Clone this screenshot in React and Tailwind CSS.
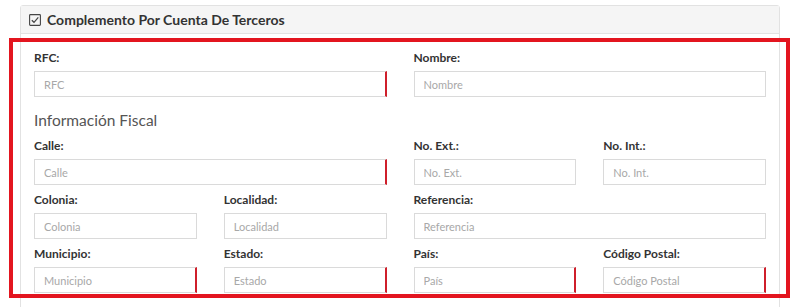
import React from "react";

const fields = [
  { label: "RFC:", placeholder: "RFC", span: "col-span-2", required: true },
  { label: "Nombre:", placeholder: "Nombre", span: "col-span-2" },
  { heading: "Información Fiscal" },
  { label: "Calle:", placeholder: "Calle", span: "col-span-2", required: true },
  { label: "No. Ext.:", placeholder: "No. Ext.", span: "col-span-1" },
  { label: "No. Int.:", placeholder: "No. Int.", span: "col-span-1" },
  { label: "Colonia:", placeholder: "Colonia", span: "col-span-1" },
  { label: "Localidad:", placeholder: "Localidad", span: "col-span-1" },
  { label: "Referencia:", placeholder: "Referencia", span: "col-span-2" },
  { label: "Municipio:", placeholder: "Municipio", span: "col-span-1", required: true },
  { label: "Estado:", placeholder: "Estado", span: "col-span-1", required: true },
  { label: "País:", placeholder: "País", span: "col-span-1", required: true },
  { label: "Código Postal:", placeholder: "Código Postal", span: "col-span-1", required: true },
];

function Field({ label, placeholder, span, required }) {
  return (
    <div className={`${span} mb-[6px]`}>
      <label className="block text-[12px] font-bold leading-[18px] mb-[4px] text-[#333]">
        {label}
      </label>
      <input
        type="text"
        placeholder={placeholder}
        className={`block w-full h-[26px] bg-white border border-[#dadada] px-[9px] text-[11px] text-[#555] placeholder:text-[#a8a8a8] outline-none ${
          required ? "border-r-2 border-r-[#cf1f2b]" : ""
        }`}
      />
    </div>
  );
}

function CheckIcon() {
  return (
    <svg width="12" height="12" viewBox="0 0 12 12" fill="none" className="shrink-0">
      <rect x="0.6" y="0.6" width="10.8" height="10.8" rx="0.8" stroke="#444" strokeWidth="1.1" />
      <path d="M2.8 6.2 L5 8.3 L9.3 3.4" stroke="#444" strokeWidth="1.2" fill="none" />
    </svg>
  );
}

export default function App() {
  return (
    <div
      className="relative h-[307px] w-[800px] overflow-hidden bg-white"
      style={{ fontFamily: "Lato, 'Open Sans', sans-serif" }}
    >
      <div className="mx-[20px] mt-[5px] border border-[#e2e2e2] rounded-t-[3px]">
        <div className="flex items-center gap-[6px] h-[28px] pl-[8px] bg-[#f5f5f5] border-b border-[#e2e2e2]">
          <CheckIcon />
          <span className="text-[14px] font-bold text-[#333]">
            Complemento Por Cuenta De Terceros
          </span>
        </div>
        <div className="grid grid-cols-4 gap-x-[27px] px-[13px] pt-[15px] pb-[20px]">
          {fields.map((f, i) =>
            f.heading ? (
              <div
                key={i}
                className="col-span-4 h-[34px] leading-[34px] text-[15.5px] text-[#555]"
              >
                {f.heading}
              </div>
            ) : (
              <Field key={i} {...f} />
            )
          )}
        </div>
      </div>
      <div className="absolute left-[9px] top-[38px] w-[781px] h-[260px] border-4 border-[#e3151f] pointer-events-none" />
    </div>
  );
}
